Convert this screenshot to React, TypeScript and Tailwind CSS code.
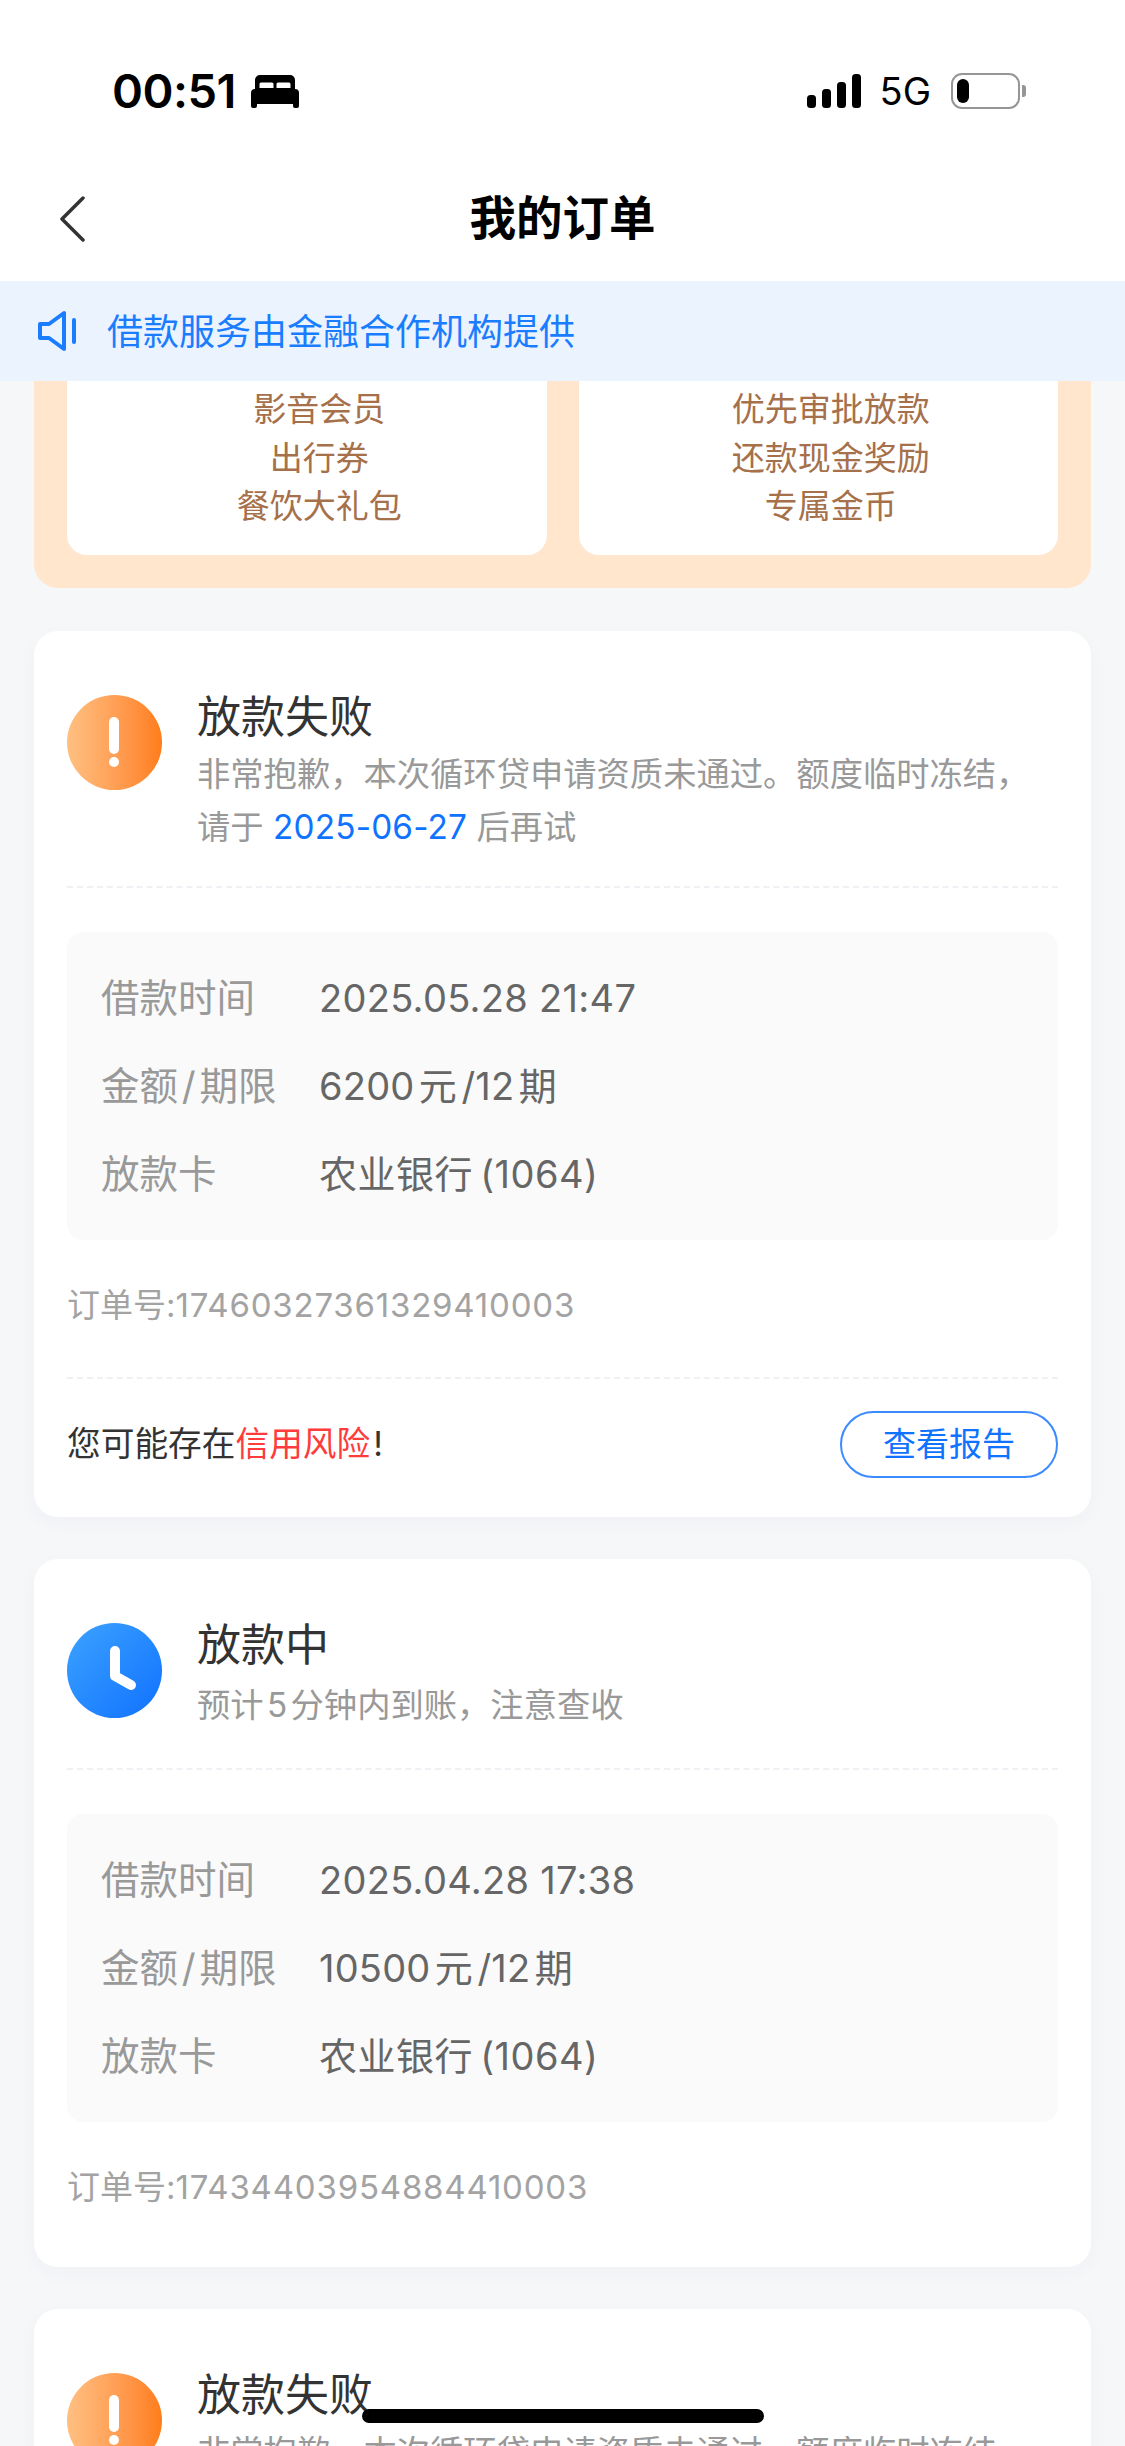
import React from 'react';

const BedIcon = () => (
  <svg width="48" height="33" viewBox="0 0 48 33" fill="#000">
    <path fillRule="evenodd" d="M9 0h30a5 5 0 0 1 5 5v9H4V5a5 5 0 0 1 5-5zM10 7.500a1.500 1.500 0 0 0-1.500 1.500v4h14V9A1.500 1.500 0 0 0 21 7.500zM27 7.500A1.500 1.500 0 0 0 25.500 9v4h14V9A1.500 1.500 0 0 0 38 7.500z" />
    <path d="M4 14h40a4 4 0 0 1 4 4v13a2 2 0 0 1-2 2h-2a2 2 0 0 1-2-2v-2H6v2a2 2 0 0 1-2 2H2a2 2 0 0 1-2-2V18a4 4 0 0 1 4-4z" />
  </svg>
);

const SignalIcon = () => (
  <svg width="54" height="34" viewBox="0 0 54 34" fill="#000">
    <rect x="0" y="21" width="9" height="13" rx="3.500" />
    <rect x="15" y="15" width="9" height="19" rx="3.500" />
    <rect x="30" y="8" width="9" height="26" rx="3.500" />
    <rect x="45" y="0" width="9" height="34" rx="3.500" />
  </svg>
);

const Battery = () => (
  <div className="flex items-center">
    <div className="w-[69px] h-[36px] rounded-[11px] border-[2.5px] border-[#969696] p-[4px]">
      <div className="w-[12px] h-full rounded-[6px] bg-black" />
    </div>
    <div className="w-[4px] h-[12px] ml-[2px] rounded-r-[3px] bg-[#969696]" />
  </div>
);

const SpeakerIcon = () => (
  <svg width="42" height="42" viewBox="0 0 42 42" fill="none" stroke="#1a7dff" strokeWidth="4" strokeLinejoin="round" strokeLinecap="round">
    <path d="M3 14h9L27 3v36L12 28H3z" />
    <path d="M37 10v22" />
  </svg>
);

const WarnIcon = () => (
  <div className="w-[95px] h-[95px] shrink-0 mt-[8px] rounded-full bg-linear-to-r from-[#ffc081] to-[#ff7d16]">
    <svg width="95" height="95" viewBox="0 0 95 95" fill="#fff">
      <rect x="42" y="22" width="10" height="37" rx="5" />
      <circle cx="47" cy="67" r="5" />
    </svg>
  </div>
);

const ClockIcon = () => (
  <div className="w-[95px] h-[95px] shrink-0 mt-[8px] rounded-full bg-linear-to-br from-[#3da2ff] to-[#1070ff]">
    <svg width="95" height="95" viewBox="0 0 95 95" fill="none" stroke="#fff" strokeWidth="10" strokeLinecap="round" strokeLinejoin="round">
      <path d="M48 28v25l16 9" />
    </svg>
  </div>
);

const Dashed = () => <div className="border-t-2 border-dashed border-[#eef0f3]" />;

const OrderCard = ({ icon, title, desc, descClass, headClass, time, amount, orderNo, footer }: {
  icon: React.ReactNode;
  title: string;
  desc: React.ReactNode;
  descClass: string;
  headClass: string;
  time: string;
  amount: string;
  orderNo?: string;
  footer?: boolean;
}) => (
  <div className="bg-white rounded-[24px] px-[33px] pt-[56px] shadow-[0_6px_20px_rgba(30,50,90,0.03)]">
    <div className={`flex gap-[35px] ${headClass}`}>
      {icon}
      <div>
        <div className="text-[44px] leading-[61px] text-[#333]">{title}</div>
        <div className={`text-[33.3px] leading-[53px] text-[#999] ${descClass}`}>{desc}</div>
      </div>
    </div>
    <Dashed />
    <div className="mt-[44px] bg-[#fafafa] rounded-[16px] py-[22px] px-[34px] text-[38px] leading-[88px]">
      <div className="flex">
        <span className="w-[218px] text-[38.5px] text-[#999]">借款时间</span>
        <span className="text-[#666] tracking-[0.3px]">{time}</span>
      </div>
      <div className="flex">
        <span className="w-[218px] text-[38.5px] text-[#999] [word-spacing:-7px]">金额 / 期限</span>
        <span className="text-[#666] tracking-[0.2px] [word-spacing:-6.5px]">{amount}</span>
      </div>
      <div className="flex">
        <span className="w-[218px] text-[38.5px] text-[#999]">放款卡</span>
        <span className="text-[#666] tracking-[0.5px] [word-spacing:-4px]">农业银行 (1064)</span>
      </div>
    </div>
    <div className="mt-[41px] text-[33px] leading-[48px] text-[#a3a3a3]">
      订单号:<span className="tracking-[0.8px]">{orderNo}</span>
    </div>
    {footer ? (
      <>
        <div className="mt-[48px]"><Dashed /></div>
        <div className="mt-[32px] pb-[39px] flex items-center justify-between">
          <div className="text-[33.7px] text-[#333]">
            您可能存在<span className="text-[#ff3b3b]">信用风险</span><span className="ml-[3px]">!</span>
          </div>
          <div className="w-[218px] h-[67px] flex items-center justify-center rounded-full border-2 border-[#3b8bff] text-[33px] text-[#0f73ff]">
            查看报告
          </div>
        </div>
      </>
    ) : (
      <div className="h-[56px]" />
    )}
  </div>
);

export default function App() {
  return (
    <div className="relative h-[2446px] overflow-hidden bg-[#f6f7f9] font-['Inter','Noto_Sans_CJK_SC',sans-serif]">
      {/* Status bar */}
      <div className="h-[158px] bg-white pt-[73px] pl-[112px] pr-[99px] flex items-start justify-between">
        <div className="flex items-center gap-[15px] h-[36px]">
          <span className="text-[47px] leading-[36px] font-semibold text-black tracking-[-0.5px]">00:51</span>
          <BedIcon />
        </div>
        <div className="flex items-center h-[36px]">
          <SignalIcon />
          <span className="ml-[19px] mr-[20px] text-[38px] leading-[36px] text-black">5G</span>
          <Battery />
        </div>
      </div>

      {/* Nav */}
      <div className="h-[123px] bg-white grid grid-cols-[1fr_auto_1fr] items-center pb-[2px]">
        <svg className="ml-[58px]" width="28" height="46" viewBox="0 0 28 46" fill="none" stroke="#333" strokeWidth="3.500" strokeLinecap="round" strokeLinejoin="round">
          <path d="M25 2L4 23l21 21" />
        </svg>
        <div className="text-[46.5px] font-semibold text-black">我的订单</div>
        <div />
      </div>

      {/* Notice */}
      <div className="h-[100px] bg-[#eaf3fe] flex items-center pl-[37px] gap-[28px]">
        <SpeakerIcon />
        <span className="pt-[2px] text-[36px] text-[#1a7dff]">借款服务由金融合作机构提供</span>
      </div>

      <div className="px-[34px] flex flex-col gap-[42px]">
        {/* Benefits panel, scrolled under the notice */}
        <div className="mb-[1px] bg-[#ffe6cd] rounded-b-[24px] px-[33px] pb-[33px] grid grid-cols-2 gap-[32px]">
          {[
            ['影音会员', '出行券', '餐饮大礼包'],
            ['优先审批放款', '还款现金奖励', '专属金币'],
          ].map((lines) => (
            <div key={lines[0]} className="h-[174px] bg-white rounded-b-[20px] pt-[4px] pl-[25px] text-center text-[33px] leading-[48.500px] text-[#a5704a]">
              {lines.map((l) => <div key={l}>{l}</div>)}
            </div>
          ))}
        </div>

        <OrderCard
          icon={<WarnIcon />}
          title="放款失败"
          desc={<>非常抱歉，本次循环贷申请资质未通过。额度临时冻结，<br />请于 <span className="text-[#0f73ff] tracking-[0.2px]">2025-06-27</span> 后再试</>}
          descClass=""
          headClass="pb-[32px]"
          time="2025.05.28 21:47"
          amount="6200 元 /12 期"
          orderNo="17460327361329410003"
          footer
        />

        <OrderCard
          icon={<ClockIcon />}
          title="放款中"
          desc="预计 5 分钟内到账，注意查收"
          descClass="mt-[3px] [word-spacing:-6px]"
          headClass="pb-[36px]"
          time="2025.04.28 17:38"
          amount="10500 元 /12 期"
          orderNo="17434403954884410003"
        />

        <OrderCard
          icon={<WarnIcon />}
          title="放款失败"
          desc="非常抱歉，本次循环贷申请资质未通过。额度临时冻结，"
          descClass=""
          headClass="pb-[32px]"
          time="2025.03.28 12:00"
          amount=""
        />
      </div>

      {/* Home indicator */}
      <div className="absolute left-[362px] top-[2409px] w-[402px] h-[14px] rounded-full bg-black" />
    </div>
  );
}
